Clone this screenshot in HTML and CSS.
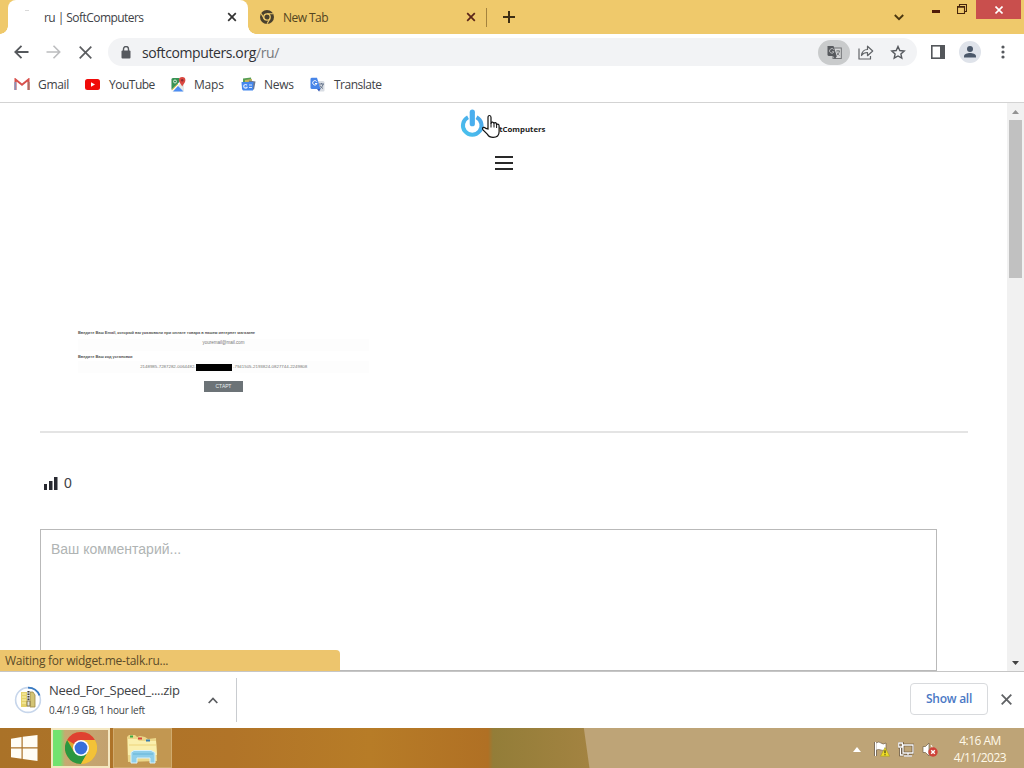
FILE: index.html
```html
<!DOCTYPE html>
<html lang="ru">
<head>
	<meta charset="UTF-8">
	<title>ru | SoftComputers</title>
	<link rel="stylesheet" href="styles.css">
</head>
<body>
	<div class="browser">
		<div class="tabstrip">
			<div class="tab active">
				<span class="spinner"></span>
				<span class="tab-title first-title">ru | SoftComputers</span>
				<svg class="tab-close" width="10" height="10" viewBox="0 0 10 10"><path d="M1.2 1.2l7.6 7.6M8.8 1.2L1.2 8.8" stroke="#333" stroke-width="1.7"/></svg>
			</div>
			<div class="tab inactive">
				<svg width="14" height="14" viewBox="0 0 14 14"><circle cx="7" cy="7" r="7" fill="#49402d"/><circle cx="7" cy="7" r="3.2" fill="#49402d" stroke="#f0cb6c" stroke-width="1.3"/><path d="M7 3.7h6M4.1 8.7L1.2 3.6M9.9 8.7L7 13.7" stroke="#f0cb6c" stroke-width="1.1"/></svg>
				<span class="tab-title">New Tab</span>
				<svg class="tab-close" width="10" height="10" viewBox="0 0 10 10"><path d="M1.2 1.2l7.6 7.6M8.8 1.2L1.2 8.8" stroke="#5a2419" stroke-width="1.7"/></svg>
			</div>
			<span class="tab-divider"></span>
			<svg class="new-tab" width="12" height="12" viewBox="0 0 12 12"><path d="M6 0v12M0 6h12" stroke="#3d2e14" stroke-width="2"/></svg>
			<svg class="tab-search" width="10" height="7" viewBox="0 0 10 7"><path d="M.8 1L5 5.2 9.2 1" fill="none" stroke="#4b3710" stroke-width="1.9"/></svg>
			<div class="window-buttons">
				<svg class="minimize" width="8" height="3"><path d="M0 1.5h8" stroke="#501c08" stroke-width="3"/></svg>
				<svg class="restore" width="10" height="10" viewBox="0 0 10 10"><path d="M.5 2.5h7v7h-7zM2.5 2V.5h7v7H8" fill="none" stroke="#46250c" stroke-width="1.1"/><path d="M0 3h8" stroke="#46250c" stroke-width="1.5"/></svg>
				<div class="close-window">
					<svg width="8" height="8" viewBox="0 0 8 8"><path d="M.5.5l7 7M7.5.5l-7 7" stroke="#fff" stroke-width="1.6"/></svg>
				</div>
			</div>
		</div>

		<div class="toolbar">
			<svg class="nav-back" width="15" height="14" viewBox="0 0 15 14"><path d="M14.5 7h-13M7.5.8L1.3 7l6.2 6.2" fill="none" stroke="#55585c" stroke-width="1.8"/></svg>
			<svg class="nav-forward" width="15" height="14" viewBox="0 0 15 14"><path d="M.5 7h13M7.5.8L13.7 7l-6.2 6.2" fill="none" stroke="#bcbdbf" stroke-width="1.6"/></svg>
			<svg class="nav-stop" width="13" height="13" viewBox="0 0 13 13"><path d="M.7.7l11.6 11.6M12.3.7L.7 12.3" stroke="#5b5d60" stroke-width="1.7"/></svg>
			<div class="address">
				<svg class="lock" width="10" height="13" viewBox="0 0 10 13"><path d="M2.5 5V3a2.5 2.5 0 0 1 5 0v2" fill="none" stroke="#56595e" stroke-width="1.4"/><rect x=".5" y="4.5" width="9" height="8" rx="1" fill="#56595e"/></svg>
				<span class="url">softcomputers.org<span class="path">/ru/</span></span>
				<span class="translate-chip">
					<svg width="15" height="15" viewBox="0 0 15 15"><rect x="6" y="3" width="8.3" height="10.5" fill="#d6d7d8" stroke="#707275"/><path d="M.5 1h6l3.2 10H2a1.5 1.5 0 0 1-1.5-1.500z" fill="#56595d"/><path d="M6.8 4.600A2.300 2.300 0 1 0 7 6.800H5" fill="none" stroke="#b7b8ba" stroke-width="1"/><path d="M9 6h4M11 5v1M12.500 6q-.5 3-2.500 4M10 7.500q1 2 2.500 3" fill="none" stroke="#66696d" stroke-width=".8"/><path d="M6 11h4l-2 3z" fill="#56595d"/></svg>
				</span>
				<svg class="share" width="16" height="15" viewBox="0 0 16 15"><path d="M1 3.500V14h11.500V11M3.500 10.500C4 6.500 6 4.500 9.500 4.500V1.200l5.200 4.800-5.200 4.700V7.500C7 7.400 5 8.300 3.500 10.500z" fill="none" stroke="#606367" stroke-width="1.2" stroke-linejoin="round"/></svg>
				<svg class="star" width="16" height="15" viewBox="0 0 16 15"><path d="M8 1.500l1.800 4 4.400.5-3.300 2.900.9 4.300L8 11l-3.800 2.200.9-4.300L1.800 6l4.400-.5z" fill="none" stroke="#56595e" stroke-width="1.4"/></svg>
			</div>
			<svg class="side-panel" width="14" height="14" viewBox="0 0 14 14"><rect x=".8" y=".8" width="12.400" height="12.400" fill="none" stroke="#54575b" stroke-width="1.600"/><path d="M9 1h4.500v12H9z" fill="#54575b"/></svg>
			<svg class="avatar" width="22" height="22" viewBox="0 0 22 22"><circle cx="11" cy="11" r="11" fill="#dfe3ea"/><circle cx="11" cy="8" r="3" fill="#4b586a"/><path d="M5 16.500v-1.200C5 13 8.500 12 11 12s6 1 6 3.300v1.200z" fill="#4b586a"/></svg>
			<svg class="kebab" width="4" height="14" viewBox="0 0 4 14"><g fill="#56595e"><circle cx="2" cy="2" r="1.600"/><circle cx="2" cy="7" r="1.600"/><circle cx="2" cy="12" r="1.600"/></g></svg>
		</div>

		<div class="bookmarks">
			<div class="bookmark gmail">
				<svg width="16" height="12" viewBox="0 0 16 12"><path d="M1.500 12V1.500L8 6.700l6.500-5.200V12" fill="none" stroke="#d8504c" stroke-width="2"/><path d="M1.300 4v8" stroke="#8990b8" stroke-width="1.800"/><path d="M14.700 4v8" stroke="#aa6f66" stroke-width="1.800"/></svg>
				<span>Gmail</span>
			</div>
			<div class="bookmark youtube">
				<svg width="15" height="11" viewBox="0 0 15 11"><rect width="15" height="11" rx="2.500" fill="#f00b09"/><path d="M6 3.200v4.600l4-2.300z" fill="#fff"/></svg>
				<span>YouTube</span>
			</div>
			<div class="bookmark maps">
				<svg width="15" height="15" viewBox="0 0 15 15"><rect x=".5" y="1" width="12.500" height="13.500" rx="1" fill="#e5eae7"/><path d="M.5 2.500Q.5 1 2 1h6.500v5L.5 13z" fill="#389354"/><path d="M2 14.500l5-5.500 5.500 5.500z" fill="#4c8df4"/><path d="M.8 13.500L12 2.500" stroke="#fff" stroke-width="1.500"/><path d="M1 13l6-6" stroke="#f0c64e"/><path d="M11.200 9.500C10.500 7 8 6 8 3.200a3.200 3.200 0 0 1 6.400 0C14.400 6 12 7 11.200 9.500z" fill="#da4840"/><circle cx="11.200" cy="3.200" r="1.200" fill="#8e2d32"/><circle cx="4" cy="4.500" r="1.500" fill="none" stroke="#d9e9db"/></svg>
				<span>Maps</span>
			</div>
			<div class="bookmark news">
				<svg width="15" height="14" viewBox="0 0 15 14"><path d="M2 1.500l8-1 1 7H2z" fill="#559e54"/><path d="M4 3l7-1v6H4z" fill="#c6b35d"/><path d="M8 3.500l6.500 1L13 12.500H7z" fill="#6a7792"/><path d="M.5 5h12l-.5 8.500H2L1 12z" fill="#4587ed"/><path d="M6 8.300A1.800 1.800 0 1 0 6 10.300H4.500M8 8h3M8 10.500h3" fill="none" stroke="#d6e6ff" stroke-width="1.200"/></svg>
				<span>News</span>
			</div>
			<div class="bookmark translate">
				<svg width="15" height="15" viewBox="0 0 15 15"><path d="M6 4h7q1.500 0 1.500 1.500v8q0 1-1 1H9z" fill="#d9dde3"/><path d="M.5 2Q.5.8 2 .8h5L10.500 12H2Q.5 12 .5 10.500z" fill="#4785e8"/><path d="M6.800 4.700A2.200 2.200 0 1 0 7 6.500H5" fill="none" stroke="#fff"/><path d="M9 7h5M11.500 6v1M13.200 7q-.5 3-3 4.500M10 8.500q1 2 3 3" fill="none" stroke="#66758c" stroke-width="1"/><path d="M7 12h3.500L9 14.500z" fill="#3158b8"/></svg>
				<span>Translate</span>
			</div>
		</div>

		<div class="viewport">
			<div class="page">
				<div class="logo">
					<svg width="25" height="30" viewBox="0 0 25 30"><defs><linearGradient id="power" x1="0" y1="1" x2="1" y2="0"><stop offset="0" stop-color="#49c2ed"/><stop offset="1" stop-color="#4ba5e9"/></linearGradient></defs><path d="M8 8.200a9.300 9.300 0 1 0 8.500 0" fill="none" stroke="url(#power)" stroke-width="4"/><path d="M12.300 3.200v11.500" stroke="#4aaeee" stroke-width="5.200" stroke-linecap="round"/></svg>
					<span>SoftComputers</span>
				</div>
				<svg class="cursor" width="18" height="25" viewBox="0 0 18 25"><path d="M6 15V3.500Q6 1.500 7.500 1.500T9 3.500V10q0-2 1.500-1.800T12 10q0-1.500 1.300-1.300T14.600 11q.2-1 1.300-.8t1.200 1.600v6q0 5.600-6 5.600-4 0-5.600-3L1 15.800q-1-1.800.4-2.400 1.200-.3 2.400 1z" fill="#fff" stroke="#111" stroke-width="1.200"/><path d="M9 9.500v4M12 10v3.500M14.600 11v3" stroke="#111" stroke-width="1"/></svg>
				<div class="menu-button"><i></i><i></i><i></i></div>

				<div class="activation">
					<div class="form-label email-label"><span>Введите Ваш Email, который вы указывали при оплате товара в нашем интернет магазине</span></div>
					<div class="form-value email-value">youremail@mail.com</div>
					<div class="form-label code-label"><span>Введите Ваш код установки</span></div>
					<div class="form-value code-value"><span class="code-start">2148985-7287282-0064482-</span><i class="redacted"></i><span class="code-end">-7941505-2193824-0827744-2249808</span></div>
					<div class="start-button">СТАРТ</div>
				</div>
				<div class="rule"></div>
				<div class="views">
					<svg width="14" height="13" viewBox="0 0 14 13"><path d="M0 7h3v6H0zM5 4h3.500v9H5zM10 0h3.500v13H10z" fill="#292a31"/></svg>
					<span>0</span>
				</div>
				<div class="comment"><span>Ваш комментарий...</span></div>
			</div>
			<div class="scrollbar">
				<svg class="scroll-arrow" width="7" height="4"><path d="M0 4l3.500-4L7 4z" fill="#929292"/></svg>
				<div class="scroll-thumb"></div>
				<svg class="scroll-arrow scroll-down" width="7" height="4"><path d="M0 0h7L3.500 4z" fill="#434343"/></svg>
			</div>
			<div class="status"><span>Waiting for widget.me-talk.ru...</span></div>
		</div>

		<div class="downloads">
			<svg class="zip-icon" width="28" height="28" viewBox="0 0 28 28"><circle cx="14" cy="14" r="12.400" fill="#fff" stroke="#c7d6eb" stroke-width="1.600"/><path d="M14 1.600A12.400 12.400 0 0 1 25.500 9.500" fill="none" stroke="#397ac2" stroke-width="1.900"/><path d="M7 6h6v15H7z" fill="#e4d16b"/><path d="M8 8h4M8 11h4M8 14h4M8 17h4" stroke="#f4e99d" stroke-width="1.500"/><path d="M16 6h3l2 3v12h-5z" fill="#d3c476" stroke="#9e8c46" stroke-width=".8"/><path d="M13 5h3v16h-3z" fill="#dce1e3"/><path d="M14.500 5v9" stroke="#45403a" stroke-width="2" stroke-dasharray="1.500 1"/><path d="M13 15h3v5h-3z" fill="none" stroke="#8a7b4b"/></svg>
			<div class="download-info">
				<div class="file-name">Need_For_Speed_....zip</div>
				<div class="file-progress">0.4/1.9 GB, 1 hour left</div>
			</div>
			<svg class="download-chevron" width="10" height="7" viewBox="0 0 10 7"><path d="M.7 6L5 1.500 9.300 6" fill="none" stroke="#5b5d60" stroke-width="1.700"/></svg>
			<span class="download-divider"></span>
			<div class="show-all">Show all</div>
			<svg class="downloads-close" width="11" height="11" viewBox="0 0 11 11"><path d="M.7.7l9.600 9.600M10.300.7L.7 10.300" stroke="#606265" stroke-width="1.800"/></svg>
		</div>
	</div>

	<div class="taskbar">
		<svg class="start" width="27" height="26" viewBox="0 0 27 26"><path d="M0 3.700L10.500 2v10.300H0zM11.700 1.800L26.500 0v12.300H11.700zM0 13.600h10.500v10.200L0 22.200zM11.700 13.600h14.800V26l-14.800-2z" fill="#fffdf5"/></svg>
		<div class="task chrome-task">
			<svg width="32" height="32" viewBox="0 0 32 32"><circle cx="16" cy="16" r="16" fill="#e0a72f"/><path d="M16 16L2.140 8A16 16 0 0 1 29.860 8H16z" fill="#df4231"/><path d="M2.140 8A16 16 0 0 0 16 32l6.930-12L16 16 9.070 20z" fill="#2b9740"/><path d="M29.860 8A16 16 0 0 1 16 32l6.930-12A8 8 0 0 0 16 8z" fill="#f3c237"/><circle cx="16" cy="16" r="8" fill="#fff"/><circle cx="16" cy="16" r="6.400" fill="#386fdb"/></svg>
		</div>
		<div class="task explorer-task">
			<svg width="33" height="30" viewBox="0 0 33 30"><path d="M1 3l2-2h6l2 2 3-1 5 1 3 2 8-1 1 23-29 1z" fill="#ecd789"/><path d="M2 5h9l2 2h17l1 14H2z" fill="#faefad"/><path d="M4 1.500h3v2H4z" fill="#3caa45"/><path d="M12 3.500h4v2h-4z" fill="#d7453b"/><path d="M20 5.500h4v2h-4z" fill="#397cac"/><path d="M3 11h27" stroke="#f3e193" stroke-width="2"/><path d="M5 29V18.500l3-2h17l4 2V29h-5v-5H11v5z" fill="#8fcee9" stroke="#d9f2fa"/><path d="M7 20h20" stroke="#65b4d7"/></svg>
		</div>
		<div class="tray">
			<svg width="8" height="5"><path d="M0 5l4-5 4 5z" fill="#fff"/></svg>
			<svg class="flag" width="16" height="16" viewBox="0 0 16 16"><path d="M1.500 1v14" stroke="#554027" stroke-width="3"/><path d="M2 2q3-2 5 0t5 0v7q-3 1-5 0t-5 0z" fill="#fff" stroke="#65523c" stroke-width=".6"/><path d="M1.500 1v14" stroke="#fff" stroke-width="1.500"/><path d="M11 6.500l4.700 8.700H6.500z" fill="#f0de25" stroke="#a29a21" stroke-width=".6"/><path d="M11 9.200v3M11 13.200v1" stroke="#4b461c" stroke-width="1.300"/></svg>
			<svg class="network" width="16" height="15" viewBox="0 0 16 15"><path d="M5 3h10v8H5zM10 11v2M6 14h8M2.500 6v7h3M.8 1h3.500v4H.8z" fill="none" stroke="#59462f" stroke-width="2.600"/><path d="M5 3h10v8H5zM10 11v2M6 14h8M2.500 6v7h3M.8 1h3.500v4H.8z" fill="none" stroke="#fff" stroke-width="1.300"/></svg>
			<svg class="volume" width="16" height="15" viewBox="0 0 16 15"><path d="M1 4.500h2.500L7 1v13l-3.500-3.500H1z" fill="#fff" stroke="#6f5e47" stroke-width=".7"/><path d="M9 3q2 2 1 5" fill="none" stroke="#fff"/><circle cx="11" cy="10" r="4.700" fill="#ce4339"/><path d="M9.200 8.200l3.600 3.600M12.800 8.200l-3.600 3.600" stroke="#fff" stroke-width="1.400"/></svg>
		</div>
		<div class="clock"><div class="time">4:16 AM</div><div class="date">4/11/2023</div></div>
	</div>
</body>
</html>
```
FILE: styles.css
```css
* {
	box-sizing: border-box;
}

body {
	margin: 0;
	width: 1024px;
	height: 768px;
	overflow: hidden;
	font-family: "Open Sans", sans-serif;
	color: #404246;
	background: #fff;
}

svg {
	display: block;
	flex: none;
}

.browser {
	display: flex;
	flex-direction: column;
	height: 728px;
}

.tabstrip {
	display: flex;
	align-items: center;
	height: 34px;
	padding-left: 8px;
	background: #efc96b;
	flex: none;
}

.tab {
	display: flex;
	align-items: center;
	height: 34px;
	font-size: 12px;
	letter-spacing: -0.55px;
}

.tab.active {
	position: relative;
	width: 240px;
	padding: 0 11px 0 17px;
	background: #fff;
	border-radius: 8px 8px 0 0;
}

/* curved feet of the active tab */
.tab.active::before,
.tab.active::after {
	content: "";
	position: absolute;
	bottom: 0;
	width: 8px;
	height: 8px;
}

.tab.active::before {
	left: -8px;
	background: radial-gradient(circle at 0 0, transparent 7.5px, #fff 8px);
}

.tab.active::after {
	right: -8px;
	background: radial-gradient(circle at 100% 0, transparent 7.5px, #fff 8px);
}

.tab.inactive {
	width: 238px;
	padding: 0 10px 0 12px;
	color: #534521;
}

.spinner {
	width: 4px;
	height: 1px;
	margin: -14px 15px 0 0;
	background: #d9d9d9;
}

.inactive .tab-title {
	margin-left: 9px;
}

.tab-close {
	margin-left: auto;
}

.tab-divider {
	width: 1px;
	height: 19px;
	background: #a4833e;
}

.new-tab {
	margin-left: 16px;
}

.tab-search {
	margin-left: 379px;
}

.window-buttons {
	display: flex;
	align-self: flex-start;
	height: 19px;
	margin-left: 28px;
}

.minimize {
	margin-top: 10px;
}

.restore {
	margin: 4px 9px 0 17px;
}

.close-window {
	display: flex;
	align-items: center;
	justify-content: center;
	width: 45px;
	height: 19px;
	background: #c94f4d;
}

.toolbar {
	display: flex;
	align-items: center;
	height: 36px;
	padding-left: 14px;
	flex: none;
}

.nav-forward {
	margin-left: 17px;
}

.nav-stop {
	margin-left: 18px;
}

.address {
	display: flex;
	align-items: center;
	width: 809px;
	height: 28px;
	margin-left: 16px;
	padding-left: 13px;
	border-radius: 14px;
	background: #f2f3f5;
}

.url {
	width: 687px;
	margin-left: 11px;
	font-size: 14px;
	letter-spacing: -0.4px;
	color: #303136;
	white-space: nowrap;
}

.path {
	color: #77797d;
}

.translate-chip {
	display: flex;
	align-items: center;
	justify-content: center;
	width: 32px;
	height: 25px;
	margin-left: -11px;
	border-radius: 13px;
	background: #c9cbcc;
	flex: none;
}

.share {
	margin-left: 8px;
}

.star {
	margin-left: 16px;
}

.side-panel {
	margin-left: 14px;
}

.avatar {
	margin-left: 14px;
}

.kebab {
	margin-left: 20px;
}

.bookmarks {
	display: flex;
	align-items: center;
	height: 33px;
	padding: 0 0 4px 14px;
	border-bottom: 1px solid #d3d3d3;
	font-size: 12px;
	letter-spacing: -0.5px;
	flex: none;
}

.bookmark {
	display: flex;
	align-items: center;
}

.gmail { width: 71px; gap: 8px; letter-spacing: -0.3px; }
.youtube { width: 86px; gap: 9px; }
.maps { width: 70px; gap: 8px; letter-spacing: -0.2px; }
.news { width: 69px; gap: 8px; letter-spacing: -0.3px; }
.translate { gap: 9px; }

.viewport {
	position: relative;
	display: flex;
	height: 568px;
	overflow: hidden;
	flex: none;
}

.page {
	position: relative;
	width: 1007px;
}

.logo {
	display: flex;
	width: 88px;
	height: 43px;
	margin-left: 460px;
	padding-top: 6px;
}

.logo span {
	margin: 15px 0 0 2px;
	font: bold 7.8px/10px "Open Sans", sans-serif;
	color: #222;
}

.cursor {
	position: absolute;
	left: 482px;
	top: 11px;
}

.menu-button {
	display: flex;
	flex-direction: column;
	gap: 4px;
	width: 18px;
	margin: 10px 0 0 495px;
}

.menu-button i {
	height: 2px;
	background: #292929;
}

.activation {
	width: 291px;
	height: 68px;
	margin: 159px 0 0 78px;
	font: 4.5px/8px "Liberation Sans", sans-serif;
	color: #777;
}

.form-label {
	height: 10px;
	font-size: 4px;
	font-weight: bold;
	letter-spacing: -0.05px;
	color: #555;
	white-space: nowrap;
}

.form-value {
	height: 12px;
	text-align: center;
	white-space: nowrap;
	background: #fdfdfd;
}

.code-label {
	height: 8px;
	margin-top: 2px;
}

.code-value {
	display: flex;
	align-items: center;
	padding-left: 62px;
	font-size: 4.4px;
}

.code-start {
	width: 56px;
	flex: none;
}

.redacted {
	width: 36px;
	height: 7px;
	background: #000;
	flex: none;
}

.code-end {
	padding-left: 1px;
}

.start-button {
	width: 39px;
	height: 11px;
	margin: 8px auto 0 126px;
	font-size: 5px;
	line-height: 11px;
	text-align: center;
	color: #e9eeee;
	background: #6c7377;
}

.rule {
	width: 928px;
	height: 2px;
	margin: 34px 0 0 40px;
	background: #e4e4e4;
}

.views {
	display: flex;
	align-items: center;
	height: 20px;
	margin: 40px 0 0 44px;
	font: 14px "Liberation Sans", sans-serif;
}

.views span {
	margin-left: 6px;
}

.comment {
	width: 897px;
	height: 142px;
	margin: 36px 0 0 40px;
	padding: 10px;
	border: 1px solid #b9b9b9;
	font: 14px/18px "Liberation Sans", sans-serif;
	color: #b0b4b4;
}

.scrollbar {
	display: flex;
	flex-direction: column;
	align-items: center;
	width: 17px;
	padding: 7px 0 6px;
	background: #f1f1f1;
}

.scroll-thumb {
	width: 13px;
	height: 158px;
	margin-top: 6px;
	background: #c1c1c1;
}

.scroll-down {
	margin-top: auto;
}

.status {
	position: absolute;
	left: 0;
	bottom: 0;
	width: 340px;
	height: 21px;
	padding-left: 5px;
	border-radius: 0 4px 0 0;
	background: #edc56d;
	font-size: 12px;
	line-height: 21px;
	letter-spacing: -0.26px;
	color: #5b4b29;
}

.downloads {
	display: flex;
	align-items: center;
	height: 57px;
	padding-left: 14px;
	border-top: 1px solid #c6c6c6;
	flex: none;
}

.zip-icon {
	margin-top: -1px;
}

.download-info {
	width: 151px;
	margin: -1px 0 0 7px;
	white-space: nowrap;
}

.file-name {
	font-size: 13px;
	line-height: 20px;
	letter-spacing: -0.33px;
}

.file-progress {
	font-size: 10px;
	line-height: 20px;
	letter-spacing: -0.25px;
}

.download-chevron {
	margin-left: 8px;
}

.download-divider {
	width: 1px;
	height: 44px;
	margin-left: 18px;
	background: #c9ccd0;
}

.show-all {
	width: 78px;
	height: 32px;
	margin: -2px 0 0 673px;
	border: 1px solid #d8dadd;
	border-radius: 4px;
	font-size: 12px;
	font-weight: 600;
	line-height: 30px;
	letter-spacing: -0.25px;
	text-align: center;
	color: #4a78c5;
}

.downloads-close {
	margin: -2px 0 0 13px;
}

.taskbar {
	display: flex;
	align-items: center;
	height: 40px;
	padding-left: 11px;
	background: linear-gradient(82deg, transparent 0 57.2%, #bea477 57.3%), linear-gradient(90deg, #aa7228 0, #b17428 230px, #b77c27 370px, #b07024 488px, #937d38 493px, #a38341 590px);
}

.task {
	display: flex;
	justify-content: center;
	width: 59px;
	height: 40px;
	border: 1px solid #d0ab6e;
}

.chrome-task {
	margin-left: 13px;
	padding-top: 2px;
	border: 2px solid #f4e7c1;
	background: linear-gradient(90deg, #72e36f 0 7px, #c6aa71 12px, #c3a16e);
}

.explorer-task {
	margin-left: 3px;
	padding-top: 5px;
	background: #c29751;
}

.tray {
	display: flex;
	align-items: center;
	margin: 2px 0 0 681px;
}

.flag {
	margin-left: 13px;
}

.network,
.volume {
	margin-left: 8px;
}

.clock {
	width: 60px;
	margin: 2px 0 0 12px;
	font-size: 12px;
	line-height: 17px;
	letter-spacing: -0.5px;
	text-align: center;
	color: #fff9e9;
	white-space: nowrap;
}
```
